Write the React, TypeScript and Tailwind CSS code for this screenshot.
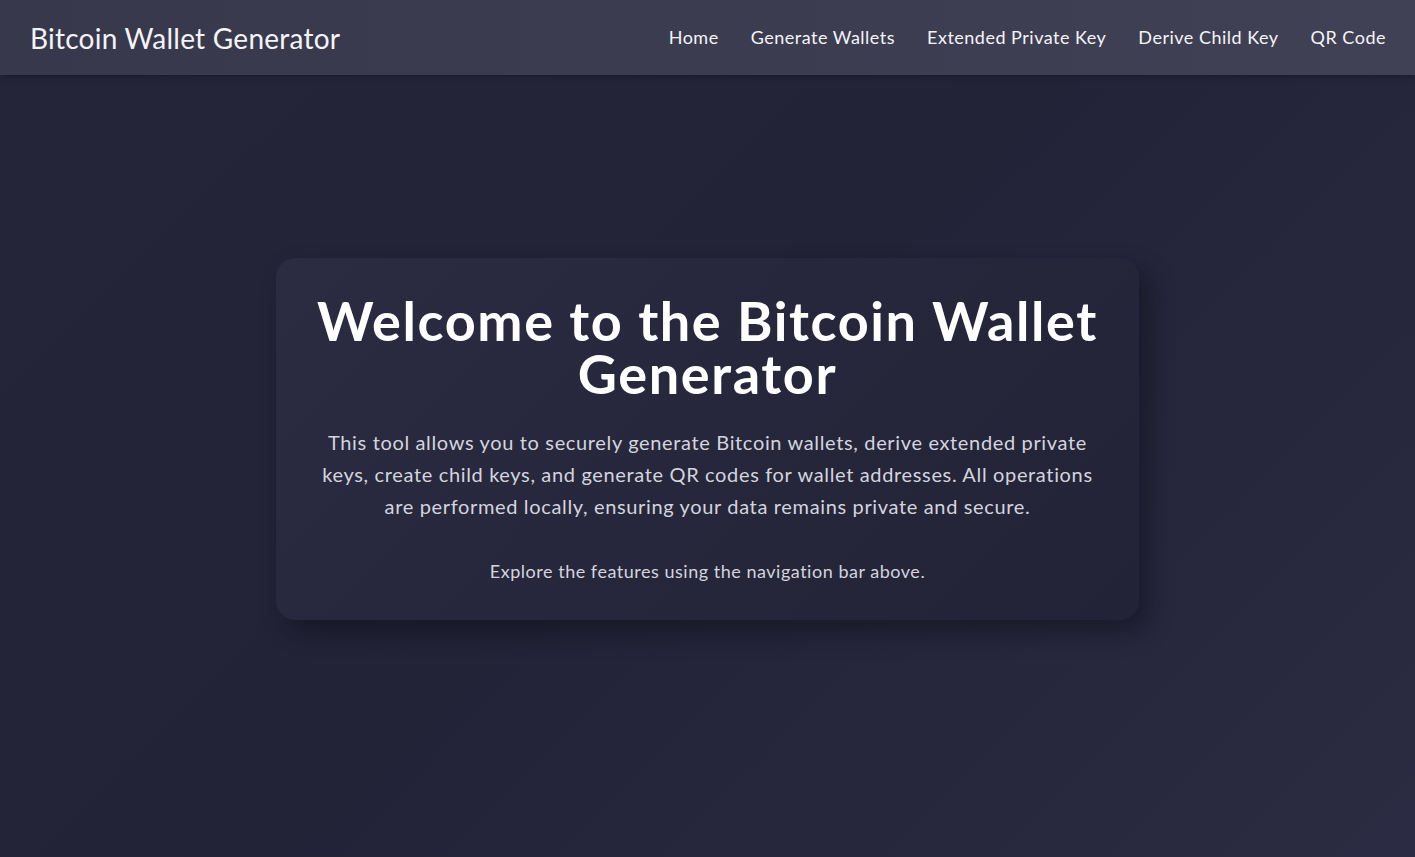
import React from "react";

export default function App() {
  const links = ["Home", "Generate Wallets", "Extended Private Key", "Derive Child Key", "QR Code"];
  return (
    <div
      className="min-h-[857px] w-full flex flex-col bg-[linear-gradient(135deg,#242539_0%,#222337_50%,#2b2c43_100%)] text-white"
      style={{ fontFamily: "Lato, 'Noto Sans', sans-serif" }}
    >
      <header className="h-[75px] shrink-0 flex items-center justify-between pl-[30px] pr-[29px] bg-[linear-gradient(90deg,#38384c_0%,#3d3d51_60%,#414155_100%)] shadow-[0_2px_6px_rgba(0,0,0,0.25)]">
        <div className="text-[28px] leading-none tracking-[0.25px] text-[#f4f4f8]">Bitcoin Wallet Generator</div>
        <nav className="flex items-center gap-[32px]">
          {links.map((l) => (
            <a key={l} className="text-[18px] tracking-[0.5px] text-[#f4f4f8]">
              {l}
            </a>
          ))}
        </nav>
      </header>
      <main className="flex-1 flex justify-center pt-[183px]">
        <div className="w-[863px] h-[362px] rounded-[20px] px-[36px] pt-[36px] bg-[linear-gradient(135deg,#2b2c42_0%,#25263a_60%,#222336_100%)] shadow-[10px_12px_24px_rgba(10,10,20,0.45)] text-center">
          <h1 className="text-[54px] font-bold leading-[53px] tracking-[1.6px] text-white">
            Welcome to the Bitcoin Wallet Generator
          </h1>
          <p className="mt-[26px] px-[4px] text-[20px] leading-[32px] tracking-[0.65px] text-[#d4d4df]">
            This tool allows you to securely generate Bitcoin wallets, derive extended private keys, create child keys, and generate QR codes for wallet addresses. All operations are performed locally, ensuring your data remains private and secure.
          </p>
          <p className="mt-[33px] text-[18px] leading-[32px] tracking-[0.52px] text-[#d4d4df]">
            Explore the features using the navigation bar above.
          </p>
        </div>
      </main>
    </div>
  );
}
